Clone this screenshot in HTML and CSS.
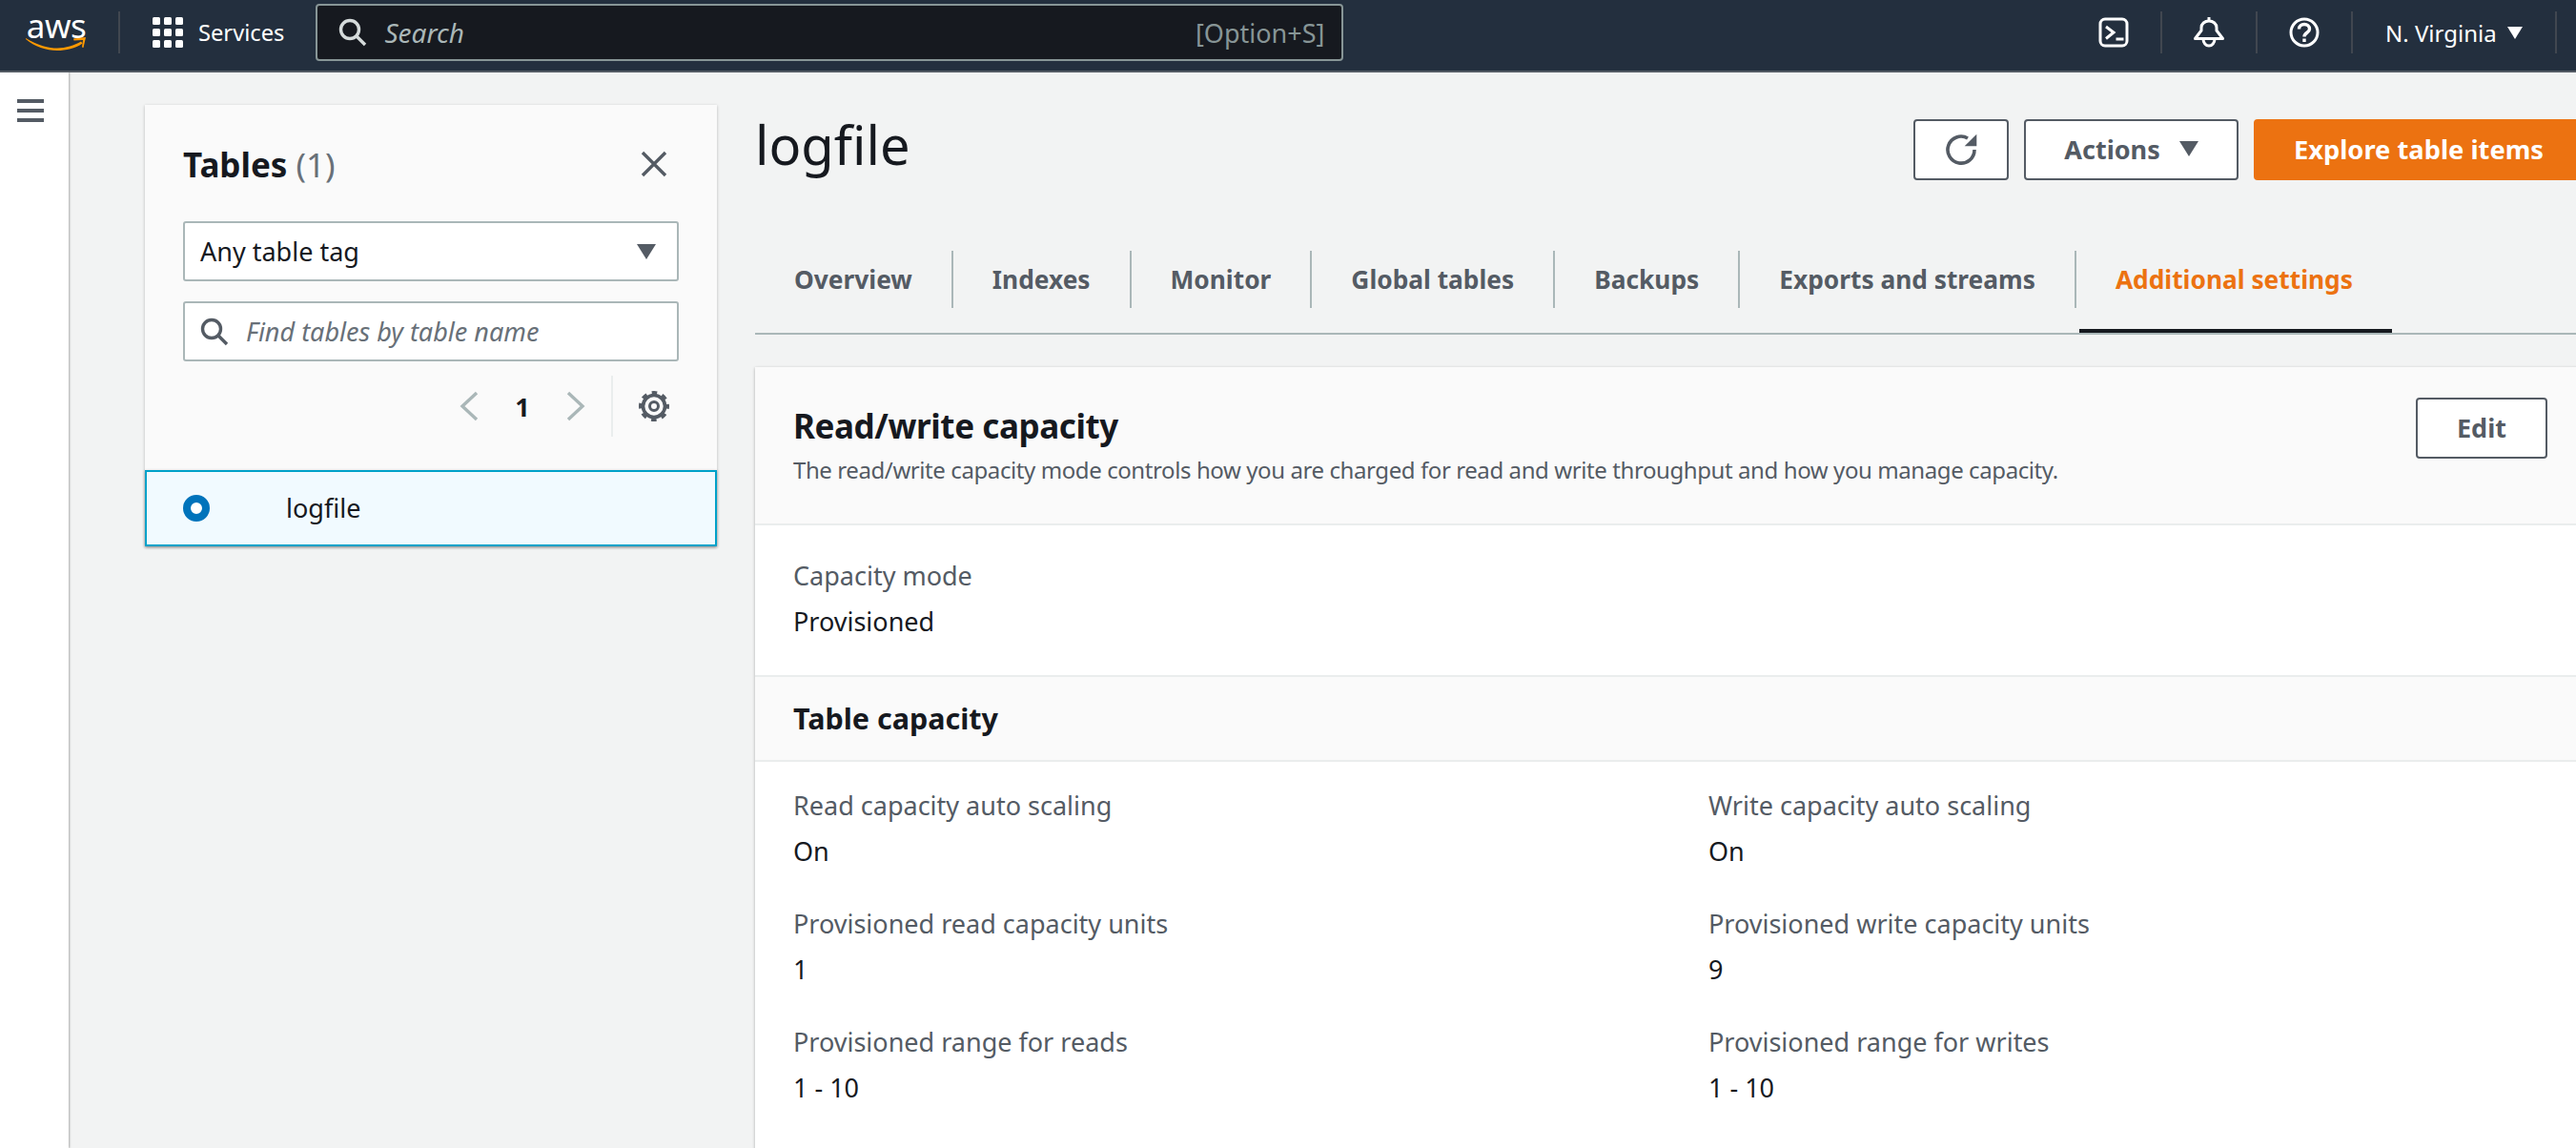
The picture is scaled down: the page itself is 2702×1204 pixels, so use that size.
FILE: index.html
```html
<!DOCTYPE html>
<html lang="en">
<head>
  <meta charset="UTF-8">
  <title>logfile | DynamoDB</title>
  <link rel="stylesheet" href="styles.css">
</head>
<body>
  <header class="topbar">
    <div class="logo">
      <span class="logo-text">aws</span>
      <svg class="logo-smile" width="64" height="14" viewBox="0 0 64 14" fill="#f90"><path d="M0 1c13 8 24 10.500 33 10.500 9 0 18-3 25-7l1.500 2C52 12 42 14 33 14 22 14 9 10 0 2z"/><path d="M50 1.500l13-1.500-2.500 11-1.500-.500 1-7.500-9.500.500z"/></svg>
    </div>
    <span class="bar-sep sep-logo"></span>
    <svg class="grid-icon" width="32" height="32" viewBox="0 0 32 32" fill="#fff">
      <rect x="0" y="0" width="8" height="8" rx="1.5"/><rect x="12" y="0" width="8" height="8" rx="1.5"/><rect x="24" y="0" width="8" height="8" rx="1.5"/>
      <rect x="0" y="12" width="8" height="8" rx="1.5"/><rect x="12" y="12" width="8" height="8" rx="1.5"/><rect x="24" y="12" width="8" height="8" rx="1.5"/>
      <rect x="0" y="24" width="8" height="8" rx="1.5"/><rect x="12" y="24" width="8" height="8" rx="1.5"/><rect x="24" y="24" width="8" height="8" rx="1.5"/>
    </svg>
    <span class="services">Services</span>
    <div class="global-search">
      <svg width="30" height="30" viewBox="0 0 30 30" fill="none" stroke="#d5dbdb" stroke-width="3.4"><circle cx="12" cy="12" r="9.500"/><path d="M19 19l9 9"/></svg>
      <span class="global-search-text">Search</span>
      <span class="shortcut">[Option+S]</span>
    </div>
    <div class="bar-right">
      <span class="bar-item">
        <svg width="32" height="32" viewBox="0 0 32 32" fill="none" stroke="#fff" stroke-width="3"><rect x="2" y="2" width="28" height="28" rx="5"/><path d="M8 10l8 6-8 6.500"/><path d="M18.500 23h8"/></svg>
      </span>
      <span class="bar-item">
        <svg width="32" height="32" viewBox="0 0 32 32" fill="none" stroke="#fff" stroke-width="3"><path d="M1.500 22.500L8 14v-3c0-4 3.500-7 8-7s8 3 8 7v3l6.500 8.500z" stroke-linejoin="round"/><path d="M16 0v4"/><path d="M10 23a6 7 0 0 0 12 0"/></svg>
      </span>
      <span class="bar-item">
        <svg width="32" height="32" viewBox="0 0 32 32" fill="none" stroke="#fff" stroke-width="3"><circle cx="16" cy="16" r="14"/><path d="M10.500 12.500c0-3 2.500-5 5.500-5s5.500 2 5.500 5c0 4-5.500 3.500-5.500 8" stroke-width="3.400"/><path d="M16 22.500v3.500" stroke-width="3.400"/></svg>
      </span>
      <span class="region">N. Virginia <i class="caret caret-white"></i></span>
    </div>
  </header>

  <div class="shell">
    <nav class="side-nav">
      <svg class="menu-icon" width="28" height="24" viewBox="0 0 28 24" fill="#545b64"><rect width="28" height="4"/><rect y="10" width="28" height="4"/><rect y="20" width="28" height="4"/></svg>
    </nav>

    <aside class="tables-panel">
      <div class="panel-head">
        <h2 class="panel-title">Tables <span class="count">(1)</span></h2>
        <svg width="28" height="28" viewBox="0 0 28 28" stroke="#545b64" stroke-width="3.4" fill="none"><path d="M2 2l24 24M26 2L2 26"/></svg>
      </div>
      <div class="select-box">
        <span>Any table tag</span>
        <i class="caret caret-grey"></i>
      </div>
      <div class="find-box">
        <svg width="30" height="30" viewBox="0 0 30 30" fill="none" stroke="#545b64" stroke-width="3.4"><circle cx="12" cy="12" r="9.500"/><path d="M19 19l9 9"/></svg>
        <span class="find-text">Find tables by table name</span>
      </div>
      <div class="pager">
        <svg width="20" height="32" viewBox="0 0 20 32" fill="none" stroke="#aab7b8" stroke-width="3.4"><path d="M18 2L3 16l15 14"/></svg>
        <span class="page-num">1</span>
        <svg width="20" height="32" viewBox="0 0 20 32" fill="none" stroke="#aab7b8" stroke-width="3.4"><path d="M2 2l15 14L2 30"/></svg>
        <span class="pager-sep"></span>
        <svg width="32" height="32" viewBox="0 0 32 32" fill="none" stroke="#545b64"><circle cx="16" cy="16" r="4.500" stroke-width="3"/><circle cx="16" cy="16" r="11.500" stroke-width="3.600"/><circle cx="16" cy="16" r="14" stroke-width="4" stroke-dasharray="5.500 5.500" stroke-dashoffset="2.750"/></svg>
      </div>
      <div class="table-row">
        <span class="radio"></span>
        <span class="table-name">logfile</span>
      </div>
    </aside>

    <main class="content">
      <div class="page-head">
        <h1 class="page-title">logfile</h1>
        <div class="page-actions">
          <button class="btn btn-icon">
            <svg width="34" height="34" viewBox="0 0 34 34" fill="none" stroke="#545b64" stroke-width="3.6"><path d="M24 5a14 14 0 1 0 7 12"/><path d="M33.300.700v12.600H20.700z" fill="#545b64" stroke="none"/></svg>
          </button>
          <button class="btn btn-actions">Actions <i class="caret caret-grey"></i></button>
          <button class="btn btn-primary">Explore table items</button>
        </div>
      </div>

      <div class="tabs">
        <a class="tab">Overview</a>
        <a class="tab">Indexes</a>
        <a class="tab">Monitor</a>
        <a class="tab">Global tables</a>
        <a class="tab">Backups</a>
        <a class="tab">Exports and streams</a>
        <a class="tab active">Additional settings</a>
      </div>

      <section class="card">
        <div class="card-head">
          <div>
            <h2 class="card-title">Read/write capacity</h2>
            <p class="card-desc">The read/write capacity mode controls how you are charged for read and write throughput and how you manage capacity.</p>
          </div>
          <button class="btn btn-edit">Edit</button>
        </div>
        <div class="mode-block">
          <div class="field-label">Capacity mode</div>
          <div class="field-value">Provisioned</div>
        </div>
        <div class="sub-head">Table capacity</div>
        <div class="field-grid">
          <div class="field">
            <div class="field-label">Read capacity auto scaling</div>
            <div class="field-value">On</div>
          </div>
          <div class="field">
            <div class="field-label">Write capacity auto scaling</div>
            <div class="field-value">On</div>
          </div>
          <div class="field">
            <div class="field-label">Provisioned read capacity units</div>
            <div class="field-value">1</div>
          </div>
          <div class="field">
            <div class="field-label">Provisioned write capacity units</div>
            <div class="field-value">9</div>
          </div>
          <div class="field">
            <div class="field-label">Provisioned range for reads</div>
            <div class="field-value">1 - 10</div>
          </div>
          <div class="field">
            <div class="field-label">Provisioned range for writes</div>
            <div class="field-value">1 - 10</div>
          </div>
        </div>
      </section>
    </main>
  </div>
</body>
</html>
```

FILE: styles.css
```css
html, body {
  margin: 0;
  padding: 0;
  height: 100%;
  overflow: hidden;
}

body {
  font-family: 'Noto Sans', sans-serif;
  font-size: 27px;
  color: #16191f;
  background-color: #f2f3f3;
}

h1, h2, p {
  margin: 0;
  font-weight: normal;
}

.topbar {
  display: flex;
  align-items: center;
  box-sizing: border-box;
  height: 76px;
  padding-bottom: 6px;
  background-color: #232f3e;
  border-bottom: 2px solid #545b64;
  color: #fff;
}

.logo {
  position: relative;
  width: 64px;
  height: 44px;
  margin-left: 27px;
}

.logo-text {
  display: block;
  font-size: 35px;
  line-height: 30px;
  text-align: center;
  letter-spacing: -0.5px;
}

.logo-smile {
  position: absolute;
  left: 0;
  top: 27px;
}

.bar-sep {
  width: 2px;
  height: 44px;
  background-color: #414750;
}

.sep-logo {
  margin-left: 33px;
}

.grid-icon {
  margin-left: 34px;
}

.services {
  margin-left: 16px;
  font-size: 23.700px;
}

.global-search {
  display: flex;
  align-items: center;
  box-sizing: border-box;
  width: 1078px;
  height: 60px;
  margin-left: 33px;
  padding: 0 18px 0 22px;
  background-color: #16191f;
  border: 2px solid #879596;
  border-radius: 4px;
}

.global-search-text {
  margin-left: 18px;
  font-style: italic;
  font-size: 28px;
  color: #aab7b8;
}

.shortcut {
  margin-left: auto;
  color: #879596;
}

.bar-right {
  display: flex;
  align-items: center;
  margin-left: auto;
}

.bar-item {
  display: flex;
  justify-content: center;
  align-items: center;
  box-sizing: border-box;
  width: 100px;
  height: 44px;
  border-right: 2px solid #414750;
}

.region {
  display: flex;
  align-items: center;
  box-sizing: border-box;
  width: 214px;
  height: 44px;
  margin-right: 20px;
  padding-left: 34px;
  border-right: 2px solid #414750;
  font-size: 24px;
  white-space: pre;
}

.caret {
  display: inline-block;
  width: 0;
  height: 0;
  border-left: 10px solid transparent;
  border-right: 10px solid transparent;
}

.caret-white {
  border-left-width: 8px;
  border-right-width: 8px;
  border-top: 13px solid #fff;
  margin-left: 5px;
}

.caret-grey {
  border-top: 16px solid #545b64;
}

.shell {
  display: flex;
  height: 1128px;
  overflow: hidden;
}

.side-nav {
  flex: none;
  width: 72px;
  background-color: #fff;
  box-shadow: 1px 0 2px rgba(0, 0, 0, 0.3);
  padding-top: 28px;
  box-sizing: border-box;
}

.menu-icon {
  display: block;
  margin-left: 18px;
}

.tables-panel {
  flex: none;
  align-self: flex-start;
  width: 600px;
  margin-left: 80px;
  margin-top: 34px;
  background-color: #fafafa;
  box-shadow: 0 1px 3px rgba(0, 0, 0, 0.25);
}

.panel-head {
  display: flex;
  justify-content: space-between;
  align-items: center;
  height: 48px;
  padding: 38px 52px 2px 40px;
}

.panel-title {
  font-size: 35px;
  font-weight: 700;
}

.count {
  color: #687078;
  font-weight: normal;
}

.select-box, .find-box {
  display: flex;
  align-items: center;
  box-sizing: border-box;
  width: 520px;
  height: 63px;
  margin-left: 40px;
  background-color: #fff;
  border: 2px solid #aab7b8;
  border-radius: 3px;
}

.select-box {
  justify-content: space-between;
  margin-top: 34px;
  padding: 0 22px 0 16px;
}

.find-box {
  margin-top: 21px;
  padding: 0 16px;
}

.find-text {
  margin-left: 18px;
  font-style: italic;
  color: #687078;
}

.pager {
  display: flex;
  align-items: center;
  justify-content: flex-end;
  height: 64px;
  margin-top: 15px;
  padding-right: 50px;
}

.page-num {
  width: 92px;
  text-align: center;
  font-weight: 700;
}

.pager-sep {
  width: 2px;
  height: 64px;
  margin: 0 27px 0 27px;
  background-color: #eaeded;
}

.table-row {
  display: flex;
  align-items: center;
  box-sizing: border-box;
  height: 80px;
  margin-top: 35px;
  padding-left: 38px;
  background-color: #f1faff;
  border: 2px solid #00a1c9;
  box-shadow: 0 1px 3px rgba(0, 0, 0, 0.3);
}

.radio {
  box-sizing: border-box;
  width: 28px;
  height: 28px;
  border: 8px solid #0073bb;
  border-radius: 50%;
  background-color: #fff;
}

.table-name {
  margin-left: 80px;
  margin-bottom: 2px;
}

.content {
  flex: none;
  width: 1918px;
  margin-left: 40px;
}

.page-head {
  display: flex;
  justify-content: space-between;
  height: 184px;
}

.page-title {
  font-size: 56px;
  line-height: 76px;
  margin-top: 37px;
}

.page-actions {
  display: flex;
  gap: 16px;
  height: 64px;
  margin-top: 49px;
}

.btn {
  box-sizing: border-box;
  height: 64px;
  padding-bottom: 3px;
  background-color: #fff;
  border: 2px solid #545b64;
  border-radius: 4px;
  font-family: inherit;
  font-size: 27px;
  font-weight: 700;
  color: #545b64;
}

.btn-icon {
  display: flex;
  justify-content: center;
  align-items: center;
  width: 100px;
  padding: 0;
}

.btn-actions {
  display: flex;
  align-items: center;
  justify-content: center;
  gap: 20px;
  width: 225px;
}

.btn-primary {
  width: 346px;
  background-color: #ec7211;
  border-color: #ec7211;
  color: #fff;
  font-size: 27.300px;
}

.tabs {
  display: flex;
  height: 89px;
  border-bottom: 2px solid #aab7b8;
}

.tab {
  position: relative;
  display: flex;
  align-items: center;
  height: 60px;
  margin-top: 3px;
  padding: 0 41px;
  font-size: 26.300px;
  font-weight: 700;
  color: #545b64;
  border-right: 2px solid #aab7b8;
}

.tab.active {
  color: #ec7211;
  border-right: none;
}

.tab.active::after {
  content: "";
  position: absolute;
  left: 3px;
  right: 0;
  top: 82px;
  height: 4px;
  background-color: #16191f;
}

.card {
  margin-top: 34px;
  background-color: #fff;
  box-shadow: 0 1px 3px rgba(0, 0, 0, 0.3);
}

.card-head {
  display: flex;
  justify-content: space-between;
  box-sizing: border-box;
  height: 166px;
  padding: 32px 38px 0 40px;
  background-color: #fafafa;
  border-bottom: 2px solid #eaeded;
}

.card-title {
  font-size: 35px;
  font-weight: 700;
  line-height: 48px;
  margin-top: 6px;
  letter-spacing: -0.4px;
}

.card-desc {
  font-size: 24px;
  line-height: 32px;
  letter-spacing: -0.41px;
  color: #545b64;
  margin-top: 6px;
}

.btn-edit {
  width: 138px;
}

.mode-block {
  box-sizing: border-box;
  height: 157px;
  padding: 35px 40px 0;
}

.field-label {
  line-height: 36px;
  color: #545b64;
}

.field-value {
  line-height: 36px;
  margin-top: 12px;
}

.sub-head {
  box-sizing: border-box;
  height: 91px;
  padding-left: 40px;
  background-color: #fafafa;
  border-top: 2px solid #eaeded;
  border-bottom: 2px solid #eaeded;
  font-size: 30.500px;
  font-weight: 700;
  line-height: 86px;
}

.field-grid {
  display: grid;
  grid-template-columns: 960px 1fr;
  row-gap: 40px;
  padding: 28px 40px 200px;
}
```
